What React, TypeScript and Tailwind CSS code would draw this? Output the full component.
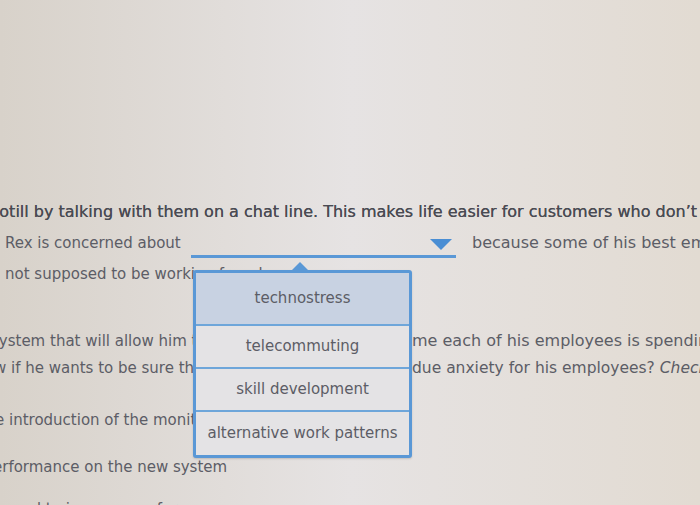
import React from "react";

const options = [
  { label: "technostress", h: "h-[51px]", active: true },
  { label: "telecommuting", h: "h-[43px]", active: false },
  { label: "skill development", h: "h-[43px]", active: false },
  { label: "alternative work patterns", h: "h-[45px]", active: false },
];

function Caret() {
  return (
    <svg width="20" height="10" viewBox="0 0 20 10" className="block">
      <path d="M10 0 L20 10 L0 10 Z" fill="#5a98d6" />
    </svg>
  );
}

function Dropdown() {
  return (
    <div className="absolute left-[193px] top-[262px] w-[219px]">
      <div className="ml-[97px] h-[8px] overflow-hidden">
        <Caret />
      </div>
      <div className="flex flex-col rounded-[3px] border-[3px] border-[#5a98d6] bg-[#e4e3e5] shadow-[0_1px_2px_rgba(0,0,0,0.15)]">
        {options.map((o, i) => (
          <div
            key={o.label}
            className={`flex items-center justify-center whitespace-nowrap ${o.h} ${
              i > 0 ? "border-t-2 border-[#6ea6da]" : ""
            } ${o.active ? "bg-[#c8d2e2]" : ""}`}
          >
            {o.label}
          </div>
        ))}
      </div>
    </div>
  );
}

export default function App() {
  return (
    <div
      className="relative h-[505px] w-[700px] overflow-hidden bg-linear-to-r from-[#d8d2ca] via-[#e6e3e3] to-[#e2dbd2] text-[15px] text-[#5c5d66]"
      style={{ fontFamily: '"DejaVu Sans", "Noto Sans", sans-serif' }}
    >
      <div className="flex flex-col whitespace-nowrap pt-[197px] leading-[30px]">
        <div className="ml-[-21px] text-[16px] text-[#4a4b53] [text-shadow:0_0_0.5px_#4a4b53]">
          Spotill by talking with them on a chat line. This makes life easier for customers who don’t
        </div>

        <div className="mt-[1px] flex items-center pl-[5px]">
          <span className="w-[186px] shrink-0">Rex is concerned about</span>
          <div className="relative mt-[2px] h-[28px] w-[265px] shrink-0 border-b-[3px] border-[#5a98d6]">
            <svg
              width="22"
              height="11"
              viewBox="0 0 22 11"
              className="absolute right-[4px] top-[9px]"
            >
              <path d="M0 0 L22 0 L11 11 Z" fill="#4a8ed4" />
            </svg>
          </div>
          <span className="ml-[16px] shrink-0 text-[16px]">because some of his best employees</span>
        </div>

        <div className="mt-[1px] pl-[5px]">not supposed to be working from home</div>

        <div className="mt-[37px] flex">
          <span className="ml-[-9px] w-[421px] shrink-0 overflow-hidden">
            system that will allow him to track the ti
          </span>
          <span className="shrink-0 text-[16px]">me each of his employees is spending</span>
        </div>

        <div className="mt-[-3px] flex">
          <span className="ml-[-6px] w-[418px] shrink-0 overflow-hidden">
            w if he wants to be sure that the change will not cause un
          </span>
          <span className="shrink-0 text-[15.5px]">
            due anxiety for his employees? <i>Check all that apply.</i>
          </span>
        </div>

        <div className="mt-[22px] ml-[-5px]">
          e introduction of the monitoring system
        </div>

        <div className="mt-[17px] ml-[-7px]">erformance on the new system</div>

        <div className="mt-[12px] pl-[5px]">used to improve performance</div>
      </div>

      <Dropdown />
    </div>
  );
}
